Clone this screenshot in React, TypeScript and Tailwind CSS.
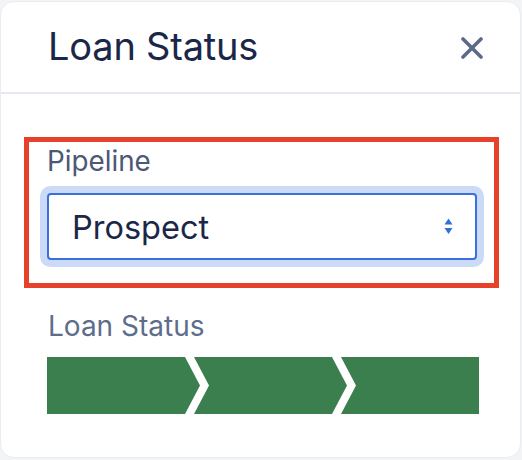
import React from "react";

export default function App() {
  return (
    <div className="w-[522px] h-[460px] bg-[#f3f4f6] overflow-hidden" style={{ fontFamily: "Inter, 'Noto Sans', sans-serif" }}>
      <div className="w-[521px] h-[457px] mt-[1px] bg-white rounded-[14px] border border-[#e9ecf0] flex flex-col">
        <div className="h-[92px] shrink-0 flex items-center justify-between pl-[47px] pr-[37px] border-b-2 border-[#e6eaf0]">
          <h1 className="text-[38px] leading-none font-normal text-[#1b2748] tracking-[-0.2px] mt-[-2px]">Loan Status</h1>
          <svg width="22" height="22" viewBox="0 0 22 22" className="mt-[2px]">
            <path d="M2 2 L20 20 M20 2 L2 20" stroke="#5b6a89" strokeWidth="3.6" strokeLinecap="round" />
          </svg>
        </div>
        <div className="pl-[23px] pt-[43px]">
          <div className="w-[475px] h-[151px] border-[5px] border-[#e8412b] pl-[18px] pt-[1px]">
            <div className="text-[27.8px] leading-[36px] text-[#4b5876]">Pipeline</div>
            <div className="mt-[14px] w-[430px] h-[67px] rounded-[4px] border-2 border-[#3a6fdc] bg-white shadow-[0_0_0_7px_#cbdaf6] flex items-center justify-between pl-[23px] pr-[22px]">
              <span className="text-[32.5px] leading-none text-[#1b2748] mt-[4px]">Prospect</span>
              <svg width="9" height="17" viewBox="0 0 9 17">
                <path d="M4.5 0.5 L8.5 6.5 L0.5 6.5 Z" fill="#2f6fdb" />
                <path d="M0.5 10 L8.5 10 L4.5 16 Z" fill="#2f6fdb" />
              </svg>
            </div>
          </div>
        </div>
        <div className="pl-[47px] pt-[20px]">
          <div className="text-[28px] leading-[36px] text-[#5d6d8c]">Loan Status</div>
          <svg width="432" height="57" viewBox="0 0 432 57" className="mt-[13px] -ml-[1px] block">
            <polygon points="0,0 138,0 153,28.5 138,57 0,57" fill="#3a7f4d" />
            <polygon points="147,0 285,0 300,28.5 285,57 147,57 162,28.5" fill="#3a7f4d" />
            <polygon points="294,0 432,0 432,57 294,57 309,28.5" fill="#3a7f4d" />
          </svg>
        </div>
      </div>
    </div>
  );
}
